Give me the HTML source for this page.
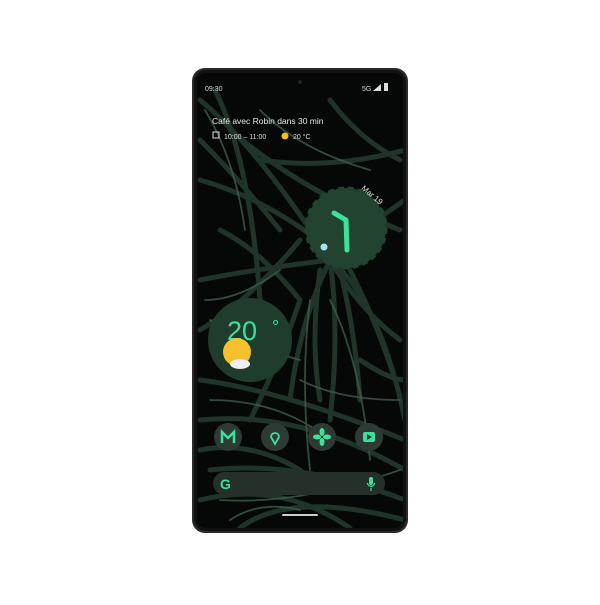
<!DOCTYPE html>
<html><head><style>
body{margin:0;width:600px;height:600px;background:#fff;overflow:hidden;font-family:"Liberation Sans",sans-serif}
</style></head><body>
<svg width="600" height="600" viewBox="0 0 600 600" xmlns="http://www.w3.org/2000/svg">
<defs><clipPath id="scr"><rect x="197" y="73" width="206" height="455" rx="9"/></clipPath></defs>
<rect x="192" y="68" width="216" height="465" rx="13" fill="#2a2a2a"/>
<rect x="194" y="70" width="212" height="461" rx="12" fill="#111"/>
<rect x="197" y="73" width="206" height="455" rx="9" fill="#050806"/>
<g clip-path="url(#scr)" fill="none" stroke-linecap="round">
<g stroke="#223a2d" stroke-width="5" opacity=".9">
<path d="M200 100 Q260 150 330 260"/><path d="M215 90 Q250 160 260 300"/><path d="M230 130 Q300 190 400 230"/>
<path d="M200 180 Q270 200 330 250"/><path d="M260 160 Q330 170 405 150"/><path d="M300 240 Q250 300 200 330"/>
<path d="M330 260 Q360 310 400 340"/><path d="M330 260 Q300 320 290 400"/><path d="M330 260 Q340 330 330 420"/>
<path d="M330 260 Q380 300 405 420"/><path d="M330 260 Q250 270 200 280"/><path d="M330 260 Q360 230 405 200"/>
<path d="M200 380 Q280 390 405 440"/><path d="M200 420 Q300 410 405 470"/><path d="M210 470 Q300 460 405 500"/>
<path d="M200 500 Q280 480 350 528"/><path d="M240 528 Q290 490 405 520"/><path d="M300 300 Q280 360 250 420"/>
<path d="M360 360 Q390 380 405 380"/><path d="M220 230 Q260 250 300 300"/>
<path d="M320 270 Q310 340 320 400"/><path d="M340 270 Q355 330 360 400"/><path d="M350 270 Q380 330 395 380"/>
<path d="M200 140 Q240 180 280 230"/><path d="M330 100 Q360 140 400 160"/><path d="M200 450 Q250 440 300 470"/>
</g>
<g stroke="#3d5e4a" stroke-width="1.8" opacity=".8">
<path d="M260 110 Q300 150 370 170"/><path d="M330 300 Q360 360 370 460"/><path d="M310 300 Q300 380 310 470"/><path d="M210 320 Q260 350 300 360"/><path d="M220 500 Q300 505 400 470"/>
<path d="M205 110 Q235 160 245 230"/><path d="M280 270 Q240 300 205 300"/><path d="M300 380 Q340 400 400 400"/>
<path d="M210 400 Q280 400 330 440"/><path d="M230 520 Q260 500 300 510"/>
</g>
</g>
<circle cx="300" cy="82" r="2" fill="#222"/>
<text x="205" y="91" font-size="7" fill="#ddd">09:30</text>
<text x="362" y="91" font-size="7" fill="#ddd">5G</text>
<path d="M373 91 L381 91 L381 84 Z" fill="#ddd"/><rect x="384" y="83" width="4" height="8" fill="#ddd"/>
<text x="212" y="124" font-size="8.5" fill="#e8e8e8">Café avec Robin dans 30 min</text>
<rect x="213" y="132" width="6" height="6" fill="none" stroke="#ddd" stroke-width="1"/>
<text x="224" y="139" font-size="7" fill="#ddd">10:00 – 11:00</text>
<circle cx="285" cy="136" r="3.5" fill="#f4c020"/>
<text x="293" y="139" font-size="7" fill="#ddd">20 °C</text>
<!-- clock -->
<circle cx="346" cy="228" r="40" fill="#21432f" stroke="#21432f" stroke-width="3" stroke-dasharray="6 4"/>
<text x="358" y="193" font-size="8" fill="#ddd" transform="rotate(40 365 195)">Mar 19</text>
<path d="M334 213 L346 220 L347 250" stroke="#3de19a" stroke-width="5" fill="none" stroke-linecap="round" stroke-linejoin="round"/>
<circle cx="324" cy="247" r="3.5" fill="#a8e4f0"/>
<!-- weather -->
<circle cx="250" cy="340" r="42" fill="#1f3d2c"/>
<text x="227" y="340" font-size="27" fill="#3de19a">20</text>
<text x="272" y="333" font-size="18" fill="#3de19a">°</text>
<circle cx="237" cy="352" r="14" fill="#f6c12a"/>
<ellipse cx="240" cy="364" rx="10" ry="5" fill="#eee"/>
<!-- app icons -->
<g fill="#2e3a33">
<circle cx="228" cy="437" r="14"/><circle cx="275" cy="437" r="14"/><circle cx="322" cy="437" r="14"/><circle cx="369" cy="437" r="14"/>
</g>
<path d="M222 443 V432 L228 438 L234 432 V443" stroke="#3de19a" stroke-width="2.5" fill="none"/>
<path d="M275 444 L271 437 A4 4 0 1 1 279 437 Z" stroke="#3de19a" stroke-width="1.8" fill="none"/>
<g fill="#3de19a"><ellipse cx="322" cy="432" rx="2.5" ry="4"/><ellipse cx="322" cy="442" rx="2.5" ry="4"/><ellipse cx="317" cy="437" rx="4" ry="2.5"/><ellipse cx="327" cy="437" rx="4" ry="2.5"/></g>
<rect x="363" y="432" width="12" height="10" rx="2" fill="#3de19a"/><path d="M367 434 L372 437 L367 440 Z" fill="#2e3a33"/>
<rect x="213" y="472" width="172" height="23" rx="11.5" fill="#26302b"/>
<text x="220" y="489" font-size="14" font-weight="bold" fill="#3de19a">G</text>
<rect x="369" y="477" width="4" height="8" rx="2" fill="#3de19a"/><path d="M367 483 Q371 490 375 483 M371 488 V491" stroke="#3de19a" stroke-width="1.2" fill="none"/>
<rect x="282" y="514" width="36" height="2" rx="1" fill="#ccc"/>
</svg>
</body></html>
